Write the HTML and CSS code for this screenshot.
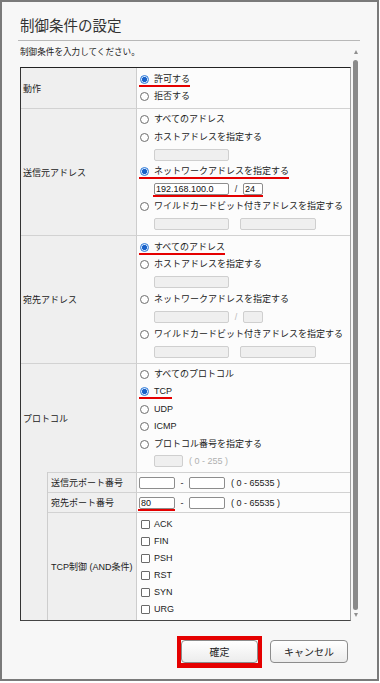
FILE: index.html
```html
<!DOCTYPE html>
<html lang="ja">
<head>
<meta charset="utf-8">
<title>制御条件の設定</title>
<link rel="stylesheet" href="styles.css">
</head>
<body>
<div class="dialog">
  <h1 class="title">制御条件の設定</h1>
  <hr class="rule">
  <div class="scroll">
    <div class="scroll-content">
      <p class="lead">制御条件を入力してください。</p>
      <div class="grid">
        <div class="lbl span2 first">動作</div>
        <div class="val first">
          <div class="opt"><span class="lab mark"><span class="radio on"></span>許可する</span></div>
          <div class="opt"><span class="lab"><span class="radio"></span>拒否する</span></div>
        </div>

        <div class="lbl span2">送信元アドレス</div>
        <div class="val">
          <div class="opt"><span class="lab"><span class="radio"></span>すべてのアドレス</span></div>
          <div class="opt"><span class="lab"><span class="radio"></span>ホストアドレスを指定する</span></div>
          <div class="opt indent"><input class="field w75" disabled></div>
          <div class="opt"><span class="lab mark"><span class="radio on"></span>ネットワークアドレスを指定する</span></div>
          <div class="opt indent"><span class="pair mark"><input class="field w75" value="192.168.100.0"><span class="slash">/</span><input class="field w20" value="24"></span></div>
          <div class="opt"><span class="lab"><span class="radio"></span>ワイルドカードビット付きアドレスを指定する</span></div>
          <div class="opt indent"><span class="pair wide"><input class="field w75" disabled><input class="field w76" disabled></span></div>
        </div>

        <div class="lbl span2">宛先アドレス</div>
        <div class="val">
          <div class="opt"><span class="lab mark"><span class="radio on"></span>すべてのアドレス</span></div>
          <div class="opt"><span class="lab"><span class="radio"></span>ホストアドレスを指定する</span></div>
          <div class="opt indent"><input class="field w75" disabled></div>
          <div class="opt"><span class="lab"><span class="radio"></span>ネットワークアドレスを指定する</span></div>
          <div class="opt indent"><span class="pair"><input class="field w75" disabled><span class="slash dim">/</span><input class="field w20" disabled></span></div>
          <div class="opt"><span class="lab"><span class="radio"></span>ワイルドカードビット付きアドレスを指定する</span></div>
          <div class="opt indent"><span class="pair wide"><input class="field w75" disabled><input class="field w76" disabled></span></div>
        </div>

        <div class="lbl span2">プロトコル</div>
        <div class="val">
          <div class="opt"><span class="lab"><span class="radio"></span>すべてのプロトコル</span></div>
          <div class="opt"><span class="lab mark"><span class="radio on"></span>TCP</span></div>
          <div class="opt"><span class="lab"><span class="radio"></span>UDP</span></div>
          <div class="opt"><span class="lab"><span class="radio"></span>ICMP</span></div>
          <div class="opt"><span class="lab"><span class="radio"></span>プロトコル番号を指定する</span></div>
          <div class="opt indent"><input class="field w29" disabled><span class="range dim">( 0 - 255 )</span></div>
        </div>

        <div class="blank"></div>
        <div class="lbl sub">送信元ポート番号</div>
        <div class="val port">
          <input class="field w36"><span class="dash">-</span><input class="field w36"><span class="range">( 0 - 65535 )</span>
        </div>

        <div class="lbl sub">宛先ポート番号</div>
        <div class="val port">
          <span class="pair mark"><input class="field w36" value="80"></span><span class="dash">-</span><input class="field w36"><span class="range">( 0 - 65535 )</span>
        </div>

        <div class="lbl sub">TCP制御 (AND条件)</div>
        <div class="val tcp">
          <div class="opt"><span class="lab"><span class="check"></span>ACK</span></div>
          <div class="opt"><span class="lab"><span class="check"></span>FIN</span></div>
          <div class="opt"><span class="lab"><span class="check"></span>PSH</span></div>
          <div class="opt"><span class="lab"><span class="check"></span>RST</span></div>
          <div class="opt"><span class="lab"><span class="check"></span>SYN</span></div>
          <div class="opt"><span class="lab"><span class="check"></span>URG</span></div>
        </div>
      </div>
    </div>
    <div class="sbar">
      <span class="arrow up"></span>
      <span class="thumb"></span>
      <span class="arrow down"></span>
    </div>
  </div>
  <div class="actions">
    <span class="hl"><button class="btn ok">確定</button></span>
    <button class="btn cancel">キャンセル</button>
  </div>
</div>
</body>
</html>
```
FILE: styles.css
```css
* { box-sizing: border-box; }
html, body { margin: 0; padding: 0; background: #fff; }
body {
  font-family: "Liberation Sans", "Noto Sans CJK JP", sans-serif;
  font-size: 9px;
  color: #222;
}
.dialog {
  width: 379px;
  height: 681px;
  border: 2px solid #7a7a7a;
  background: #f7f7f7;
  padding: 0 17px 0 16px;
  display: flex;
  flex-direction: column;
}
.title {
  margin: 14px 0 0 2px;
  font-size: 14.5px;
  line-height: 20px;
  font-weight: normal;
  color: #333;
}
.rule {
  margin: 4px 0 0;
  border: 0;
  border-top: 1px solid #b8b8b8;
  height: 0;
}
.scroll {
  margin: 5px 0 0 2px;
  height: 575px;
  display: flex;
  gap: 1px;
}
.scroll-content { width: 331px; }
.lead {
  margin: 0 0 8px;
  line-height: 13px;
  font-size: 8.6px;
}
.grid {
  display: grid;
  grid-template-columns: 27px 89px 213px;
  grid-template-rows: 40px 127px 128px 109px 20px 20px 108px;
  border-top: 1px solid #222;
  border-left: 1px solid #333;
  border-bottom: 1px solid #444;
  border-right: 1px solid #a0a0a0;
}
.lbl {
  background: #efefef;
  border-top: 1px solid #d2d2d2;
  border-right: 1px solid #cdcdcd;
  display: flex;
  align-items: center;
  padding-left: 2px;
  white-space: nowrap;
}
.span2 { grid-column: 1 / 3; }
.sub { grid-column: 2; padding-left: 3px; }
.first { border-top: 0; }
.blank {
  grid-column: 1;
  grid-row: 5 / 8;
  background: #efefef;
  border-right: 1px solid #cdcdcd;
}
.val {
  background: #fcfcfc;
  border-top: 1px solid #d2d2d2;
  display: flex;
  flex-direction: column;
  justify-content: center;
  padding-left: 3px;
}
.val.first { border-top: 0; }
.opt {
  height: 17.4px;
  display: flex;
  align-items: center;
}
.tcp .opt { height: 17px; }
.indent { padding-left: 14px; }
.lab {
  display: inline-flex;
  align-items: center;
  gap: 5px;
  line-height: 11px;
  position: relative;
  white-space: nowrap;
}
.tcp .lab { gap: 4px; }
.radio {
  flex: none;
  width: 9px;
  height: 9px;
  border-radius: 50%;
  border: 1px solid #6e6e6e;
  background: #fff;
}
.radio.on {
  border-color: #2f7ad8;
  background: radial-gradient(circle, #1a62c9 0 2.2px, #d6e8fc 2.9px);
}
.check {
  flex: none;
  width: 9px;
  height: 9px;
  margin-left: 1px;
  border: 1px solid #6a6a6a;
  border-radius: 1px;
  background: #fff;
}
.field {
  height: 12px;
  margin: 0;
  padding: 0 1px;
  border: 1px solid #8d8d8d;
  border-radius: 2px;
  background: #fff;
  font: 9px "Liberation Sans", sans-serif;
  color: #111;
  outline: none;
}
.field:disabled {
  background: #efefef;
  border-color: #cfcfcf;
}
.w75 { width: 75px; }
.w76 { width: 76px; }
.w20 { width: 20px; }
.w29 { width: 29px; }
.w36 { width: 36px; }
.pair {
  display: inline-flex;
  align-items: center;
  position: relative;
}
.pair.wide { gap: 11px; }
.slash { width: 14px; text-align: center; color: #333; }
.slash.dim { color: #bbb; }
.mark::after {
  content: "";
  position: absolute;
  left: -1px;
  right: 0;
  bottom: -2px;
  height: 2px;
  background: #e50000;
}
.port {
  flex-direction: row;
  align-items: center;
  justify-content: flex-start;
  padding-left: 2px;
}
.dash { width: 14px; text-align: center; }
.range { margin-left: 6px; white-space: nowrap; }
.range.dim { color: #b0b0b0; }
.sbar {
  width: 7px;
  display: flex;
  flex-direction: column;
  align-items: center;
  padding: 4px 0;
}
.arrow {
  width: 0;
  height: 0;
  border-left: 2.5px solid transparent;
  border-right: 2.5px solid transparent;
}
.arrow.up { border-bottom: 4px solid #8f8f8f; }
.arrow.down { border-top: 4px solid #8f8f8f; }
.thumb {
  flex: 1;
  width: 5px;
  margin: 6px 0 3px;
  border-radius: 3px;
  background: #8a8a8a;
}
.actions {
  margin: 15px 12px 0 0;
  display: flex;
  align-items: flex-start;
  justify-content: flex-end;
  gap: 8px;
}
.hl {
  display: flex;
  border: 4px solid #e50000;
  border-bottom-width: 5px;
}
.btn {
  height: 23px;
  padding: 0;
  border: 1px solid #8c8c8c;
  border-radius: 4px;
  background: linear-gradient(#fff, #ececec);
  font-family: "Liberation Sans", "Noto Sans CJK JP", sans-serif;
  font-size: 10px;
  color: #222;
}
.ok { width: 77px; }
.cancel { width: 78px; margin-top: 4px; }
```
